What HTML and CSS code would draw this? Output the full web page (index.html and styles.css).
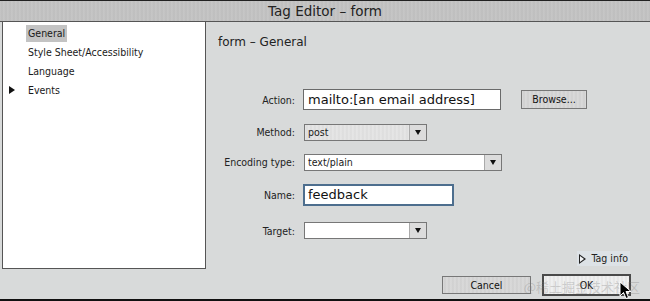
FILE: index.html
```html
<!DOCTYPE html>
<html lang="en">
<head>
    <meta charset="UTF-8">
    <meta name="viewport" content="width=device-width, initial-scale=1.0">
    <title>Tag Editor - form</title>
    <link rel="stylesheet" href="styles.css">
</head>
<body>
    <div class="window">
        <div class="titlebar">Tag Editor – form</div>
        <div class="main">
            <ul class="sidebar">
                <li class="item selected"><span>General</span></li>
                <li class="item"><span>Style Sheet/Accessibility</span></li>
                <li class="item"><span>Language</span></li>
                <li class="item has-children"><span>Events</span></li>
            </ul>
            <div class="content">
                <div class="heading">form – General</div>
                <div class="form">
                    <div class="label">Action:</div>
                    <div class="field">
                        <div class="textbox wide">mailto:[an email address]</div>
                        <div class="button browse">Browse...</div>
                    </div>
                    <div class="label">Method:</div>
                    <div class="field">
                        <div class="select short grey"><span class="value">post</span><span class="arrow"></span></div>
                    </div>
                    <div class="label">Encoding type:</div>
                    <div class="field">
                        <div class="select long"><span class="value">text/plain</span><span class="arrow"></span></div>
                    </div>
                    <div class="label">Name:</div>
                    <div class="field">
                        <div class="textbox name focused">feedback</div>
                    </div>
                    <div class="label">Target:</div>
                    <div class="field">
                        <div class="select short"><span class="value"></span><span class="arrow"></span></div>
                    </div>
                </div>
                <div class="taginfo"><span class="disclosure"></span>Tag info</div>
            </div>
        </div>
        <div class="footer">
            <div class="button cancel">Cancel</div>
            <div class="button ok">OK</div>
        </div>
        <div class="watermark">@稀土掘金技术社区</div>
        <svg class="cursor" width="14" height="20" viewBox="0 0 14 20">
            <path d="M1 1 L1 15 L4.5 11.5 L7 17.5 L9.5 16.5 L7 10.5 L12 10.5 Z" fill="#000" stroke="#fff" stroke-width="1"/>
        </svg>
    </div>
</body>
</html>
```

FILE: styles.css
```css
body, html {
    margin: 0;
    padding: 0;
    width: 650px;
    height: 301px;
    overflow: hidden;
    background: #d8dada;
    font-family: "DejaVu Sans", "Liberation Sans", sans-serif;
    color: #1a1a1a;
}
.window {
    position: relative;
    width: 650px;
    height: 301px;
    display: flex;
    flex-direction: column;
    background: #d8dada;
    box-sizing: border-box;
    border-top: 1px solid #222;
    border-bottom: 2px solid #111;
}
.titlebar {
    height: 20px;
    line-height: 20px;
    text-align: center;
    font-size: 13.5px;
    color: #222;
    background: repeating-linear-gradient(90deg, #c6c6c6 0, #bdbdbd 2px, #c8c8c8 4px);
    border-bottom: 1px solid #555;
}
.main {
    display: flex;
    height: 248px;
}
.sidebar {
    list-style: none;
    margin: 0 0 0 2px;
    padding: 3px 0 0 0;
    width: 204px;
    height: 247px;
    box-sizing: border-box;
    background: #fff;
    border: 1px solid #555;
    border-top: none;
}
.item, .label, .select .value, .button, .taginfo {
    font-family: "DejaVu Sans Condensed", "DejaVu Sans", sans-serif;
    font-size: 10.5px;
}
.item {
    position: relative;
    height: 19px;
    line-height: 17px;
    padding-left: 23px;
}
.item span {
    display: inline-block;
    padding: 0 2px;
}
.item.selected span {
    background: #c3c3c3;
}
.has-children::before {
    content: "";
    position: absolute;
    left: 6px;
    top: 4px;
    border-left: 6px solid #111;
    border-top: 4px solid transparent;
    border-bottom: 4px solid transparent;
}
.content {
    flex: 1;
    display: flex;
    flex-direction: column;
    padding: 0 0 0 12px;
}
.heading {
    margin-top: 12px;
    font-size: 12px;
    line-height: 16px;
    color: #222;
}
.form {
    margin: 33px 0 0 -8px;
    display: grid;
    grid-template-columns: 85px auto;
    grid-template-rows: 33px 32px 28px 37px 35px;
    column-gap: 8px;
    align-items: center;
}
.label {
    text-align: right;
    white-space: nowrap;
    color: #222;
}
.field {
    display: flex;
    align-items: center;
}
.textbox {
    box-sizing: border-box;
    height: 21px;
    line-height: 19px;
    padding: 0 4px;
    background: #fff;
    border: 1px solid #6a6a6a;
    font-size: 13px;
    color: #111;
    white-space: nowrap;
}
.textbox.wide {
    width: 198px;
}
.textbox.name {
    width: 151px;
    height: 22px;
}
.textbox.focused {
    border: 2px solid #4d6e8e;
    line-height: 18px;
    padding-left: 3px;
}
.select {
    display: flex;
    box-sizing: border-box;
    height: 17px;
    background: #fff;
    border: 1px solid #777;
    margin-left: 1px;
}
.select.short {
    width: 123px;
}
.select.long {
    width: 198px;
}
.select.grey .value {
    background: repeating-linear-gradient(90deg, #e6e6e6 0, #dcdcdc 2px, #e8e8e8 4px);
}
.select .value {
    flex: 1;
    line-height: 15px;
    padding-left: 3px;
}
.select .arrow {
    width: 16px;
    position: relative;
    border-left: 1px solid #aaa;
    background: #dcdcdc;
}
.select .arrow::after {
    content: "";
    position: absolute;
    left: 5px;
    top: 5px;
    border-top: 5px solid #111;
    border-left: 3px solid transparent;
    border-right: 3px solid transparent;
}
.button {
    box-sizing: border-box;
    text-align: center;
    color: #111;
    background: repeating-linear-gradient(90deg, #dadada 0, #cfcfcf 2px, #dcdcdc 4px);
    border: 1px solid #777;
}
.browse {
    width: 66px;
    height: 19px;
    line-height: 17px;
    margin-left: 20px;
}
.taginfo {
    align-self: flex-end;
    margin: 3px 20px 0 0;
    padding: 0 2px;
    height: 15px;
    line-height: 15px;
    color: #222;
    background: #dde2e6;
    display: flex;
    align-items: center;
}
.disclosure {
    width: 0;
    height: 0;
    margin-right: 5px;
    border-left: 7px solid #222;
    border-top: 5px solid transparent;
    border-bottom: 5px solid transparent;
    position: relative;
}
.disclosure::after {
    content: "";
    position: absolute;
    left: -6px;
    top: -3px;
    border-left: 4px solid #f2f4f6;
    border-top: 3px solid transparent;
    border-bottom: 3px solid transparent;
}
.footer {
    flex: 1;
    display: flex;
    justify-content: flex-end;
    align-items: center;
    gap: 11px;
    padding: 0 19px 0 0;
}
.cancel {
    width: 89px;
    height: 18px;
    line-height: 16px;
}
.ok {
    width: 89px;
    height: 22px;
    line-height: 18px;
    border: 2px solid #4a4a4a;
    background: repeating-linear-gradient(90deg, #f2f2f2 0, #e4e4e4 2px, #f4f4f4 4px);
}
.watermark {
    position: absolute;
    right: 10px;
    bottom: 3px;
    font-family: "Noto Sans CJK SC", sans-serif;
    font-size: 13px;
    color: rgba(120, 120, 120, 0.3);
}
.cursor {
    position: absolute;
    left: 619px;
    top: 280px;
}
```
